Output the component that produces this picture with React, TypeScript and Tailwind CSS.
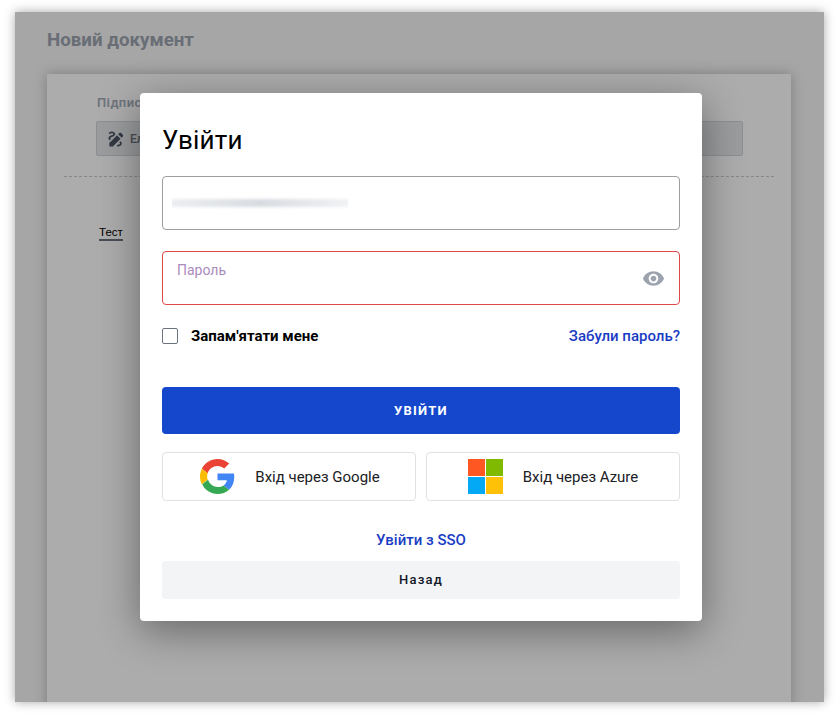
import React from 'react';
import { MdDraw } from 'react-icons/md';

const GoogleLogo = () => (
  <svg viewBox="0 0 48 48" className="size-[35px] shrink-0">
    <path fill="#EA4335" d="M24 9.5c3.54 0 6.71 1.22 9.21 3.6l6.85-6.85C35.9 2.38 30.47 0 24 0 14.62 0 6.51 5.38 2.56 13.22l7.98 6.19C12.43 13.72 17.74 9.5 24 9.5z" />
    <path fill="#4285F4" d="M46.98 24.55c0-1.57-.15-3.09-.38-4.55H24v9.02h12.94c-.58 2.96-2.26 5.48-4.78 7.18l7.73 6c4.51-4.18 7.09-10.36 7.09-17.65z" />
    <path fill="#FBBC05" d="M10.53 28.59c-.48-1.45-.76-2.99-.76-4.59s.27-3.14.76-4.59l-7.98-6.19C.92 16.46 0 20.12 0 24c0 3.88.92 7.54 2.56 10.78l7.97-6.19z" />
    <path fill="#34A853" d="M24 48c6.48 0 11.93-2.13 15.89-5.81l-7.73-6c-2.15 1.45-4.92 2.3-7.65 2.3-6.26 0-11.57-4.22-13.47-9.91l-7.98 6.19C6.51 42.62 14.62 48 24 48z" />
  </svg>
);

const MicrosoftLogo = () => (
  <div className="grid grid-cols-[17px_17px] grid-rows-[17px_17px] gap-px shrink-0">
    <div className="bg-[#ff5722]" />
    <div className="bg-[#7fba00]" />
    <div className="bg-[#03a9f4]" />
    <div className="bg-[#ffc107]" />
  </div>
);

const EyeIcon = () => (
  <svg viewBox="0 0 24 24" className="size-[23px] fill-[#9ca3af]">
    <path d="M12 4.5C7 4.5 2.73 7.61 1 12c1.73 4.39 6 7.5 11 7.5s9.27-3.11 11-7.5c-1.73-4.39-6-7.5-11-7.5zM12 17c-2.76 0-5-2.24-5-5s2.24-5 5-5 5 2.24 5 5-2.24 5-5 5zm0-8c-1.66 0-3 1.34-3 3s1.34 3 3 3 3-1.34 3-3-1.34-3-3-3z" />
  </svg>
);

const App: React.FC = () => {
  return (
    <div className="h-[714px] w-full bg-white pl-[15px] pr-[14px] pt-[12px] pb-[12px] font-['Roboto',sans-serif] overflow-hidden">
      <div className="relative h-full bg-[#f6f6f6] pl-[32px] pr-[33px] shadow-[0_0_10px_rgba(0,0,0,0.35)] overflow-hidden">
        <h1 className="h-[62px] pt-[15px] text-[18.72px] leading-[26px] font-bold text-[#9ca3af]">Новий документ</h1>

        <div className="h-[640px] bg-white pl-[49px] pr-[48px] pt-[20px] shadow-[0_0_12px_rgba(0,0,0,0.25)]">
          <div className="ml-px text-[13px] leading-[18px] font-semibold tracking-[0.4px] text-[#a5abb8]">Підпис</div>
          <div className="mt-[9px] flex h-[35px] items-center gap-[4px] rounded-[2px] border border-[#d1d5db] bg-[#e5e7eb] pl-[9px] text-[12px] font-medium text-[#6b7280]">
            <MdDraw className="size-[20px] text-[#4b5563]" />
            Електронний підпис
          </div>
          <div className="mt-[20px] -ml-[32px] -mr-[31px] border-t border-dashed border-[#c4c8ce]" />
          <div className="mt-[48px] ml-[3px] w-fit border-b-2 border-[#6b7280] font-['Liberation_Sans',sans-serif] text-[11.5px] leading-[14px] text-black">Тест</div>
        </div>

        <div className="absolute inset-0 bg-black/[0.325]" />

        <div className="absolute left-[125px] top-[81px] w-[562px] h-[528px] rounded-[4px] bg-white px-[22px] pt-[29px] shadow-[0_10px_40px_rgba(0,0,0,0.4)]">
          <h2 className="text-[26px] leading-[36px] text-black tracking-[0.15px]">Увійти</h2>

          <div className="mt-[18px] flex h-[54px] items-center rounded-[4px] border border-[#9e9e9e] pl-[9px]">
            <div className="h-[16px] w-[176px] overflow-hidden">
              <div className="-mx-[8px] mt-[4px] h-[8px] bg-gradient-to-r from-[#eef0f2] via-[#d8dbe0] to-[#f3f4f6] blur-[1.5px]" />
            </div>
          </div>

          <div className="mt-[21px] flex h-[54px] items-center justify-between rounded-[4px] border border-[#e04848] pl-[14px] pr-[14px]">
            <span className="mb-[17px] text-[14px] leading-[20px] text-[#a98bbd]">Пароль</span>
            <EyeIcon />
          </div>

          <div className="mt-[21px] flex h-[20px] items-center justify-between">
            <label className="flex items-center gap-[13px] text-[15px] font-bold text-black">
              <span className="size-[16px] rounded-[2px] border border-[#6b7280] bg-white" />
              Запам'ятати мене
            </label>
            <span className="text-[15px] font-medium text-[#1a3cc4]">Забули пароль?</span>
          </div>

          <button className="mt-[41px] h-[47px] w-full rounded-[4px] bg-[#1447cc] text-[13px] font-bold tracking-[1.2px] text-white">УВІЙТИ</button>

          <div className="mt-[18px] grid grid-cols-2 gap-[10px]">
            <div className="flex h-[49px] items-center justify-center gap-[20px] rounded-[4px] border border-[#e1e1e1] pl-[2px]">
              <GoogleLogo />
              <span className="mt-px text-[15px] text-[#202124]">Вхід через Google</span>
            </div>
            <div className="flex h-[49px] items-center justify-center gap-[20px] rounded-[4px] border border-[#e1e1e1]">
              <MicrosoftLogo />
              <span className="mt-px text-[15px] text-[#202124]">Вхід через Azure</span>
            </div>
          </div>

          <div className="mt-[28px] text-center text-[15px] leading-[22px] font-medium text-[#1a3cc4]">Увійти з SSO</div>

          <button className="mt-[10px] h-[38px] w-full rounded-[4px] bg-[#f3f4f6] text-[13px] font-medium tracking-[1.2px] text-[#111827]">Назад</button>
        </div>
      </div>
    </div>
  );
};

export default App;
